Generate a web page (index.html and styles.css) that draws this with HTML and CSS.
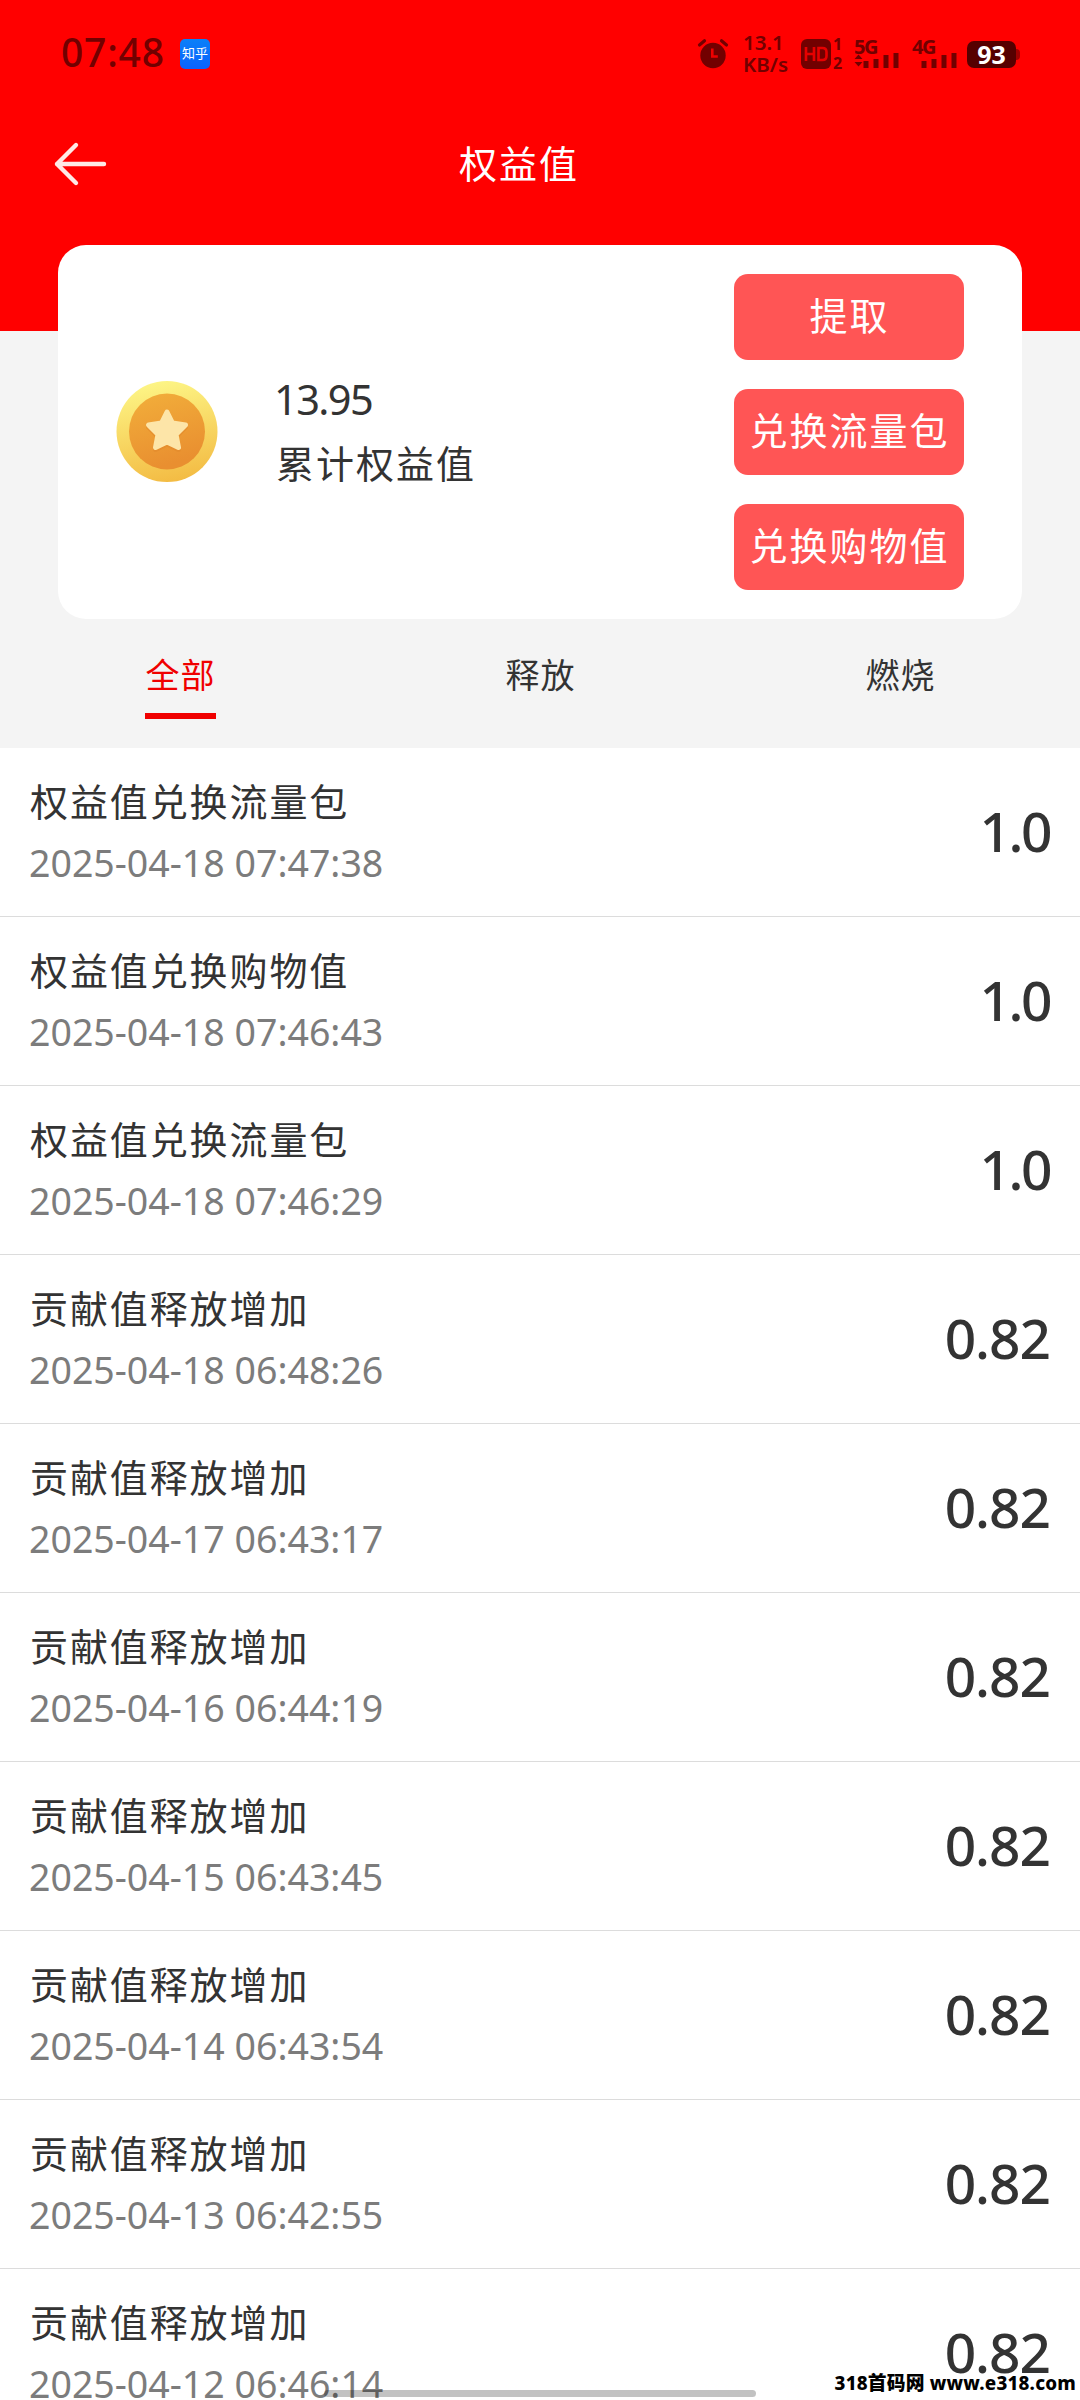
FILE: index.html
```html
<!DOCTYPE html>
<html lang="zh-CN">
<head>
<meta charset="utf-8">
<title>权益值</title>
<link rel="stylesheet" href="styles.css">
</head>
<body>
<div class="screen">
  <header class="header">
    <div class="status">
      <span class="clock">07:48</span>
      <span class="app-badge">知乎</span>
      <div class="status-icons">
        <svg class="alarm" width="30" height="30" viewBox="0 0 30 30">
          <circle cx="15" cy="16.5" r="12.7" fill="#720000"/>
          <path d="M1.5 6 6.5 1.8M28.5 6 23.5 1.8" stroke="#720000" stroke-width="3.2" stroke-linecap="round"/>
          <path d="M14.3 9.5v8h5.5" fill="none" stroke="#f00000" stroke-width="2.6"/>
        </svg>
        <div class="speed"><span>13.1</span><span>KB/s</span></div>
        <svg class="hd" width="44" height="34" viewBox="0 0 44 34">
          <rect x="1" y="2" width="30" height="30" rx="6" fill="#720000"/>
          <path d="M6 10v14M14 10v14M6 17h8M18.500 11v12h4q4 0 4-4v-4q0-4-4-4z" fill="none" stroke="#e60000" stroke-width="2.6"/>
          <text x="33" y="13" class="tiny">1</text>
          <text x="33" y="31.500" class="tiny">2</text>
        </svg>
        <svg class="net net-first" width="46" height="34" viewBox="0 0 46 34">
          <text x="0" y="16.500" class="gen">5G</text>
          <path d="M0.500 22 4.500 17.500 8.500 22zM0.500 25h8l-4 4.500z" fill="#720000"/>
          <path d="M12 24v7M22 22v9M32 18v13M42 16v15" stroke="#720000" stroke-width="5"/>
        </svg>
        <svg class="net" width="46" height="34" viewBox="0 0 46 34">
          <text x="0" y="16.500" class="gen">4G</text>
          <path d="M12 24v7M22 22v9M32 18v13M42 16v15" stroke="#720000" stroke-width="5"/>
        </svg>
        <span class="battery">93</span>
      </div>
    </div>
    <nav class="navbar">
      <svg class="back" width="54" height="44" viewBox="0 0 54 44">
        <path d="M51 22H4M23 3 4 22 23 41" fill="none" stroke="#ffe9e6" stroke-width="4.400" stroke-linecap="round" stroke-linejoin="round"/>
      </svg>
      <h1 class="title">权益值</h1>
    </nav>
  </header>

  <section class="card">
    <svg class="coin" width="102" height="102" viewBox="0 0 102 102">
      <defs>
        <linearGradient id="rim" x1="0.400" y1="0" x2="0.600" y2="1"><stop offset="0" stop-color="#fdf585"/><stop offset="1" stop-color="#f3bb43"/></linearGradient>
        <linearGradient id="face" x1="0" y1="0" x2="0.300" y2="1"><stop offset="0" stop-color="#f2af3b"/><stop offset="1" stop-color="#e98f30"/></linearGradient>
      </defs>
      <circle cx="51" cy="50.500" r="50.500" fill="url(#rim)"/>
      <circle cx="51" cy="50.500" r="38" fill="url(#face)"/>
      <path d="M51 31 56.500 42 69.500 44 60 53.500 62.500 66.500 51 61 39.500 66.500 42 53.500 32.500 44 45.500 42z" transform="translate(0 2)" fill="#e38a2c" stroke="#e38a2c" stroke-width="5" stroke-linejoin="round" opacity=".6"/>
      <path d="M51 31 56.500 42 69.500 44 60 53.500 62.500 66.500 51 61 39.500 66.500 42 53.500 32.500 44 45.500 42z" fill="#fde5a8" stroke="#fde5a8" stroke-width="5" stroke-linejoin="round"/>
    </svg>
    <div class="balance">
      <span class="balance-value">13.95</span>
      <span class="balance-label">累计权益值</span>
    </div>
    <div class="actions">
      <button class="action">提取</button>
      <button class="action">兑换流量包</button>
      <button class="action">兑换购物值</button>
    </div>
  </section>

  <div class="tabs">
    <span class="tab active">全部</span>
    <span class="tab">释放</span>
    <span class="tab">燃烧</span>
  </div>

  <ul class="list">
    <li class="row"><div class="info"><span class="name">权益值兑换流量包</span><span class="date">2025-04-18 07:47:38</span></div><span class="amount whole">1.0</span></li>
    <li class="row"><div class="info"><span class="name">权益值兑换购物值</span><span class="date">2025-04-18 07:46:43</span></div><span class="amount whole">1.0</span></li>
    <li class="row"><div class="info"><span class="name">权益值兑换流量包</span><span class="date">2025-04-18 07:46:29</span></div><span class="amount whole">1.0</span></li>
    <li class="row"><div class="info"><span class="name">贡献值释放增加</span><span class="date">2025-04-18 06:48:26</span></div><span class="amount">0.82</span></li>
    <li class="row"><div class="info"><span class="name">贡献值释放增加</span><span class="date">2025-04-17 06:43:17</span></div><span class="amount">0.82</span></li>
    <li class="row"><div class="info"><span class="name">贡献值释放增加</span><span class="date">2025-04-16 06:44:19</span></div><span class="amount">0.82</span></li>
    <li class="row"><div class="info"><span class="name">贡献值释放增加</span><span class="date">2025-04-15 06:43:45</span></div><span class="amount">0.82</span></li>
    <li class="row"><div class="info"><span class="name">贡献值释放增加</span><span class="date">2025-04-14 06:43:54</span></div><span class="amount">0.82</span></li>
    <li class="row"><div class="info"><span class="name">贡献值释放增加</span><span class="date">2025-04-13 06:42:55</span></div><span class="amount">0.82</span></li>
    <li class="row"><div class="info"><span class="name">贡献值释放增加</span><span class="date">2025-04-12 06:46:14</span></div><span class="amount">0.82</span></li>
  </ul>

  <div class="home-bar"></div>
  <div class="watermark">318首码网 www.e318.com</div>
</div>
</body>
</html>
```
FILE: styles.css
```css
* { box-sizing: border-box; }
body { margin: 0; background: #fff; }
.screen {
  position: relative;
  width: 1080px;
  height: 2400px;
  overflow: hidden;
  background: #f4f4f4;
  color: #333;
  font-family: "Noto Sans", "Noto Sans CJK SC", sans-serif;
}
svg { overflow: visible; }

/* Header */
.header { height: 331px; background: #ff0000; }
.status {
  display: flex;
  align-items: center;
  height: 108px;
  padding: 0 60px 0 61px;
  color: #720000;
}
.clock { width: 119px; font-size: 39px; font-weight: 500; line-height: 44px; letter-spacing: 0.8px; margin-top: -5px; }
.app-badge {
  width: 30px;
  height: 30px;
  border-radius: 5px;
  background: linear-gradient(#0a80f8, #0a62ff);
  color: #fff;
  font-size: 13px;
  line-height: 29px;
  text-align: center;
}
.status-icons { display: flex; align-items: center; margin-left: auto; }
.alarm { margin-right: 15px; }
.speed {
  display: flex;
  flex-direction: column;
  width: 57px;
  margin-top: -2px;
  font-size: 20.5px;
  font-weight: 600;
  line-height: 22.5px;
}
.tiny { font-size: 16px; font-weight: 700; fill: #720000; }
.gen { font-size: 20px; font-weight: 700; fill: #720000; letter-spacing: -1.5px; }
.hd { margin-right: 10px; }
.net { margin-right: 9px; }
.net-first { margin-right: 12px; }
.battery {
  position: relative;
  width: 49px;
  height: 27px;
  margin-right: 4px;
  border-radius: 7px;
  background: #560000;
  color: #fff;
  font-size: 25px;
  font-weight: 700;
  line-height: 26px;
  text-align: center;
}
.battery::after {
  content: "";
  position: absolute;
  left: 49px;
  top: 8px;
  width: 4px;
  height: 11px;
  border-radius: 0 4px 4px 0;
  background: #a00000;
}
.navbar { display: grid; grid-template-columns: 118px 802px 1fr; align-items: center; height: 112px; }
.back { margin-left: 53px; }
.title { margin: 0; color: #fff; font-size: 38px; font-weight: 400; line-height: 56px; letter-spacing: 2px; text-align: center; padding-bottom: 2px; }

/* Balance card */
.card {
  display: flex;
  align-items: center;
  width: 964px;
  height: 374px;
  margin: -86px auto 0;
  padding: 0 58px;
  border-radius: 28px;
  background: #fff;
}
.balance { display: flex; flex-direction: column; margin-left: 58px; padding-top: 2px; }
.balance-value { font-size: 41.5px; line-height: 60px; letter-spacing: -1.6px; margin-left: -2px; }
.balance-label { font-size: 38px; line-height: 68px; letter-spacing: 2px; }
.actions { display: flex; flex-direction: column; gap: 29px; margin-left: auto; }
.action {
  width: 230px;
  height: 86px;
  padding: 0 0 6px 1px;
  border: 0;
  border-radius: 14px;
  background: #ff5555;
  color: #fff;
  font: 400 38px/80px "Noto Sans CJK SC", sans-serif;
  letter-spacing: 2px;
  white-space: nowrap;
}

/* Tabs */
.tabs { display: grid; grid-template-columns: repeat(3, 1fr); justify-items: center; height: 129px; padding-top: 29px; }
.tab { height: 71px; padding-left: 1px; font-size: 34px; line-height: 54px; letter-spacing: 1px; border-bottom: 6px solid transparent; }
.tab.active { color: #f00000; border-color: #f00000; }

/* Records */
.list { margin: 0; padding: 0; list-style: none; background: #fff; }
.row {
  display: flex;
  justify-content: space-between;
  align-items: center;
  height: 169px;
  padding: 0 30px;
  border-bottom: 1px solid #dcdcdc;
}
.info { display: flex; flex-direction: column; padding-top: 1px; }
.name { font-size: 38px; line-height: 60px; letter-spacing: 1.9px; }
.date { color: #7c7c7c; font-size: 37.5px; line-height: 63px; margin-left: -1px; }
.amount { font-size: 55px; font-weight: 500; line-height: 68px; letter-spacing: -1px; padding-bottom: 2px; }
.amount.whole { letter-spacing: -2.5px; margin-right: 0; }

/* Overlays */
.home-bar { position: absolute; left: 324px; top: 2390px; width: 432px; height: 7px; border-radius: 4px; background: rgba(0, 0, 0, .24); }
.watermark {
  position: absolute;
  right: 4px;
  top: 2369px;
  color: #000;
  font: 800 18.8px/28px "Noto Sans", "Noto Sans CJK SC", sans-serif;
  letter-spacing: 0.2px;
  white-space: nowrap;
}
```
